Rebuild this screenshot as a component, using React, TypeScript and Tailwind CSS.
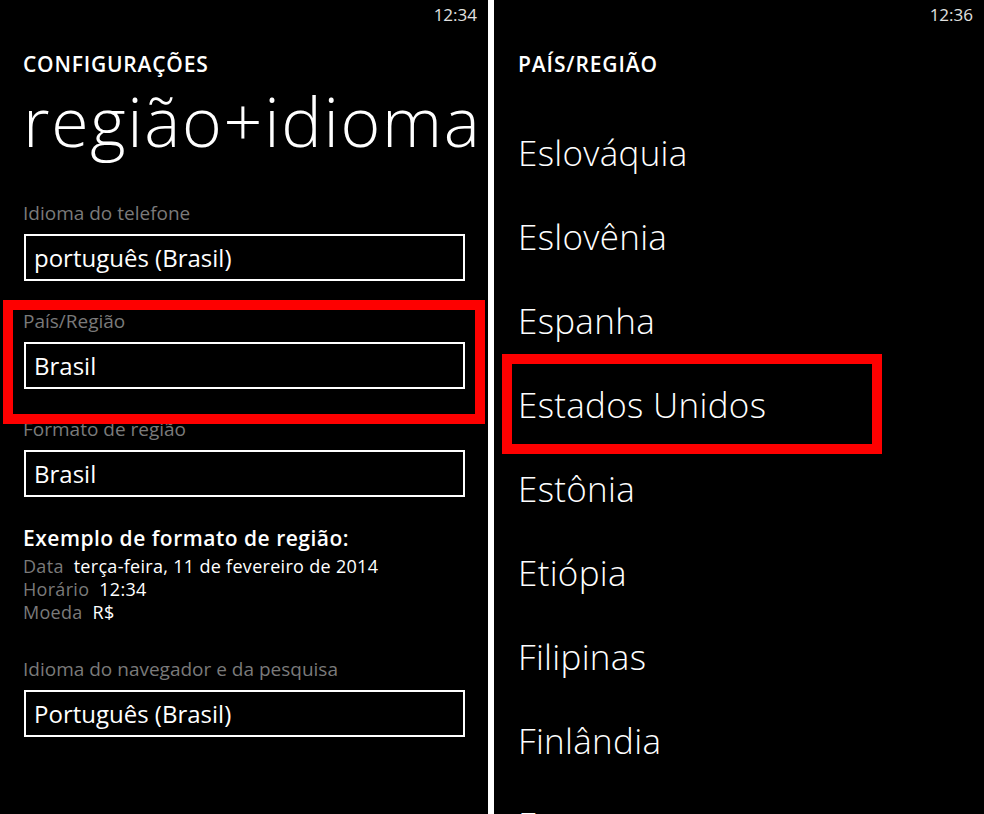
import * as React from "react";

const font = "font-['Open_Sans','Noto_Sans',sans-serif]";

const Field: React.FC<{ label: string; value: string; className?: string }> = ({
  label,
  value,
  className = ""
}) => (
  <div className={`flex flex-col ${className}`}>
    <div className="text-[19px] leading-none text-[#7a7a7a]">{label}</div>
    <div className="mt-[11px] ml-[1px] flex h-[47px] w-[441px] items-center border-2 border-white pl-[8px] text-[24px] leading-none text-white">
      {value}
    </div>
  </div>
);

const StatusBar: React.FC<{ time: string }> = ({ time }) => (
  <div className="flex justify-end pt-[6px] pr-[11px] text-[17px] leading-none text-[#e0e0e0]">
    {time}
  </div>
);

const countries = [
  "Eslováquia",
  "Eslovênia",
  "Espanha",
  "Estados Unidos",
  "Estônia",
  "Etiópia",
  "Filipinas",
  "Finlândia",
  "França"
];

export default function App() {
  return (
    <div className={`flex h-[814px] w-[984px] overflow-hidden bg-black text-white ${font}`}>
      {/* left phone: settings */}
      <div className="relative flex h-full w-[488px] shrink-0 flex-col">
        <StatusBar time="12:34" />
        <div className="pl-[23px]">
          <div className="mt-[31px] text-[21px] font-semibold leading-none tracking-[0.8px]">
            CONFIGURAÇÕES
          </div>
          <div className="mt-[12px] whitespace-nowrap text-[68px] font-light leading-none tracking-[1.7px]">
            região+idioma
          </div>
          <Field className="mt-[49px]" label="Idioma do telefone" value="português (Brasil)" />
          <Field className="mt-[31px]" label="País/Região" value="Brasil" />
          <Field className="mt-[31px]" label="Formato de região" value="Brasil" />
          <div className="mt-[31px] text-[21px] font-semibold leading-none tracking-[0.5px]">
            Exemplo de formato de região:
          </div>
          <div className="mt-[6px] text-[18px] leading-[23px] tracking-[0.3px]">
            <div>
              <span className="text-[#7a7a7a]">Data</span>&nbsp; terça-feira, 11 de fevereiro de 2014
            </div>
            <div>
              <span className="text-[#7a7a7a]">Horário</span>&nbsp; 12:34
            </div>
            <div>
              <span className="text-[#7a7a7a]">Moeda</span>&nbsp; R$
            </div>
          </div>
          <Field
            className="mt-[36px]"
            label="Idioma do navegador e da pesquisa"
            value="Português (Brasil)"
          />
        </div>
        <div className="absolute left-[3px] top-[300px] h-[124px] w-[482px] border-[10px] border-[#fe0000]" />
      </div>

      {/* divider */}
      <div className="h-full w-[6px] shrink-0 bg-white" />

      {/* right phone: country list */}
      <div className="relative flex h-full flex-1 flex-col">
        <StatusBar time="12:36" />
        <div className="pl-[24px]">
          <div className="mt-[31px] text-[21px] font-semibold leading-none tracking-[0.9px]">
            PAÍS/REGIÃO
          </div>
          <ul className="mt-[36px]">
            {countries.map((c) => (
              <li
                key={c}
                className="whitespace-nowrap text-[35px] font-light leading-[84px] tracking-[0.3px]"
              >
                {c}
              </li>
            ))}
          </ul>
        </div>
        <div className="absolute left-[8px] top-[354px] h-[100px] w-[380px] border-[10px] border-[#fe0000]" />
      </div>
    </div>
  );
}
